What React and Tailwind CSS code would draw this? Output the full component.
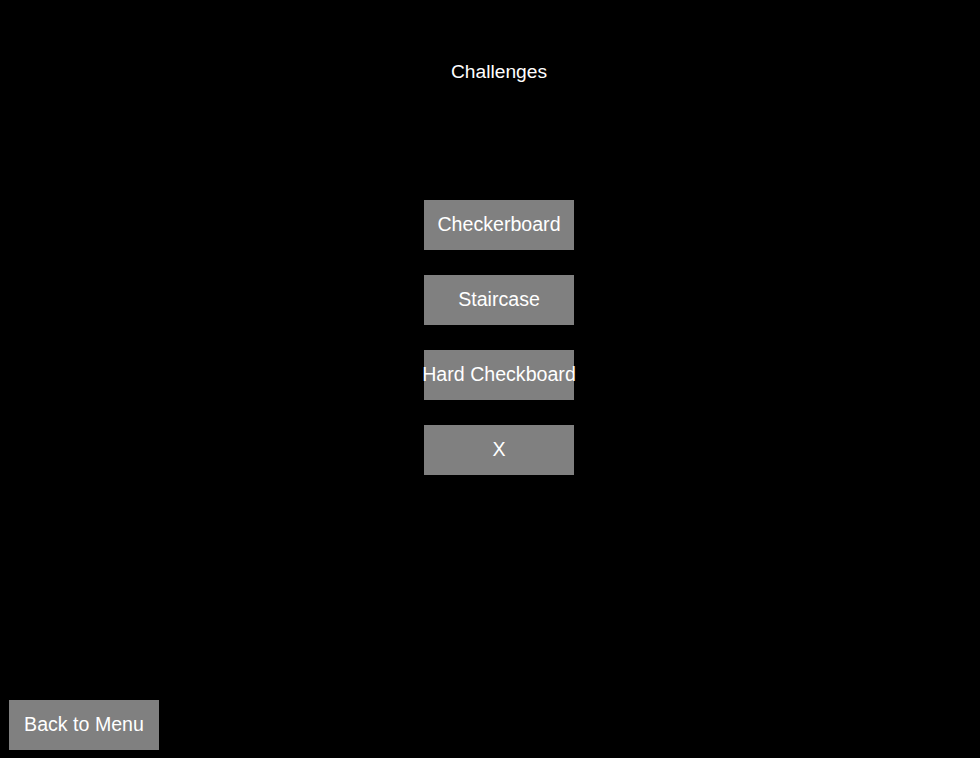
const challenges = ['Checkerboard', 'Staircase', 'Hard Checkboard', 'X']

const MenuButton = ({ label, className = '' }) => (
  <button
    className={`w-[150px] h-[50px] bg-[#808080] text-white text-[19.6px] leading-[23px] pb-[2px] flex items-center justify-center whitespace-nowrap ${className}`}
  >
    {label}
  </button>
)

export default function App() {
  return (
    <div
      className="min-h-screen w-full bg-black text-white flex flex-col"
      style={{ fontFamily: '"Liberation Sans", Arial, sans-serif' }}
    >
      {/* Title and challenge list */}
      <div className="flex flex-col items-center pl-[18px] pt-[60px]">
        <h1 className="text-[19.2px] leading-[23px] font-normal">Challenges</h1>
        <div className="flex flex-col items-center gap-[25px] mt-[117px]">
          {challenges.map((c) => (
            <MenuButton key={c} label={c} />
          ))}
        </div>
      </div>

      {/* Back button */}
      <div className="mt-auto pl-[9px] pb-[8px]">
        <MenuButton label="Back to Menu" />
      </div>
    </div>
  )
}
